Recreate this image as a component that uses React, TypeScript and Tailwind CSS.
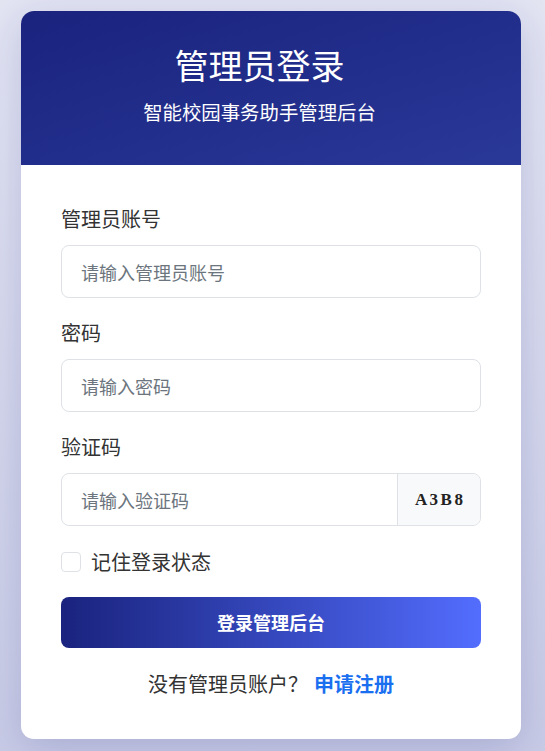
import { useState } from "react"

const cjk = { fontFamily: '"Noto Sans CJK SC", "Noto Sans", sans-serif' }

function Field({
  label,
  placeholder,
  type = "text",
  children,
}: {
  label: string
  placeholder: string
  type?: string
  children?: React.ReactNode
}) {
  return (
    <div className="flex flex-col">
      <label className="text-[20px] leading-[30px] text-[#333]">{label}</label>
      <div className="mt-[11px] flex h-[53px] overflow-hidden rounded-lg border border-[#dee2e6] bg-white">
        <input
          type={type}
          placeholder={placeholder}
          className="h-full min-w-0 flex-1 px-[19px] text-[18px] text-[#333] outline-none placeholder:text-[#6c757d]"
          style={cjk}
        />
        {children}
      </div>
    </div>
  )
}

export default function App() {
  const [remember, setRemember] = useState(false)

  return (
    <div
      className="min-h-screen bg-gradient-to-b from-[#e3e5f3] to-[#c9cce6] pt-[11px] pb-[12px]"
      style={cjk}
    >
      <div className="ml-[21px] w-[500px] overflow-hidden rounded-[13px] bg-white shadow-[0_10px_40px_rgba(26,35,126,0.18)]">
        <div className="flex h-[154px] flex-col items-center bg-gradient-to-br from-[#1a237e] to-[#2a3898] pt-[32px] pr-[23px] text-white">
          <h1 className="text-[34px] leading-[44px]">管理员登录</h1>
          <p className="mt-[12px] text-[19.4px] leading-[26px]">智能校园事务助手管理后台</p>
        </div>

        <form className="flex flex-col px-10 pt-[39px] pb-[40px]" onSubmit={(e) => e.preventDefault()}>
          <div className="flex flex-col gap-[20px]">
            <Field label="管理员账号" placeholder="请输入管理员账号" />
            <Field label="密码" placeholder="请输入密码" type="password" />
            <Field label="验证码" placeholder="请输入验证码">
              <div
                className="flex w-[83px] items-center justify-center border-l border-[#dee2e6] bg-[#f8f9fa] pl-[2px] text-[17px] font-bold text-[#222]"
                style={{ fontFamily: '"Liberation Serif", serif' }}
              >
                {"A3B8".split("").map((c, i) => (
                  <span key={i} className="w-[12.5px] text-center">
                    {c}
                  </span>
                ))}
              </div>
            </Field>
          </div>

          <label className="mt-[26px] flex items-center gap-[10px] text-[20px] leading-[20px] text-[#333]">
            <input
              type="checkbox"
              checked={remember}
              onChange={(e) => setRemember(e.target.checked)}
              className="h-5 w-5 appearance-none rounded-[4px] border border-[#dee2e6] bg-white checked:bg-[#1a237e]"
            />
            记住登录状态
          </label>

          <button
            type="submit"
            className="mt-[25px] h-[51px] rounded-lg bg-gradient-to-r from-[#1a237e] to-[#536dfe] text-[18px] font-bold text-white"
          >
            登录管理后台
          </button>

          <p className="mt-[21px] text-center text-[20px] leading-[30px] text-[#333]">
            没有管理员账户？
            <a href="#" className="ml-[6px] font-bold text-[#1a6ff0]">
              申请注册
            </a>
          </p>
        </form>
      </div>
    </div>
  )
}
